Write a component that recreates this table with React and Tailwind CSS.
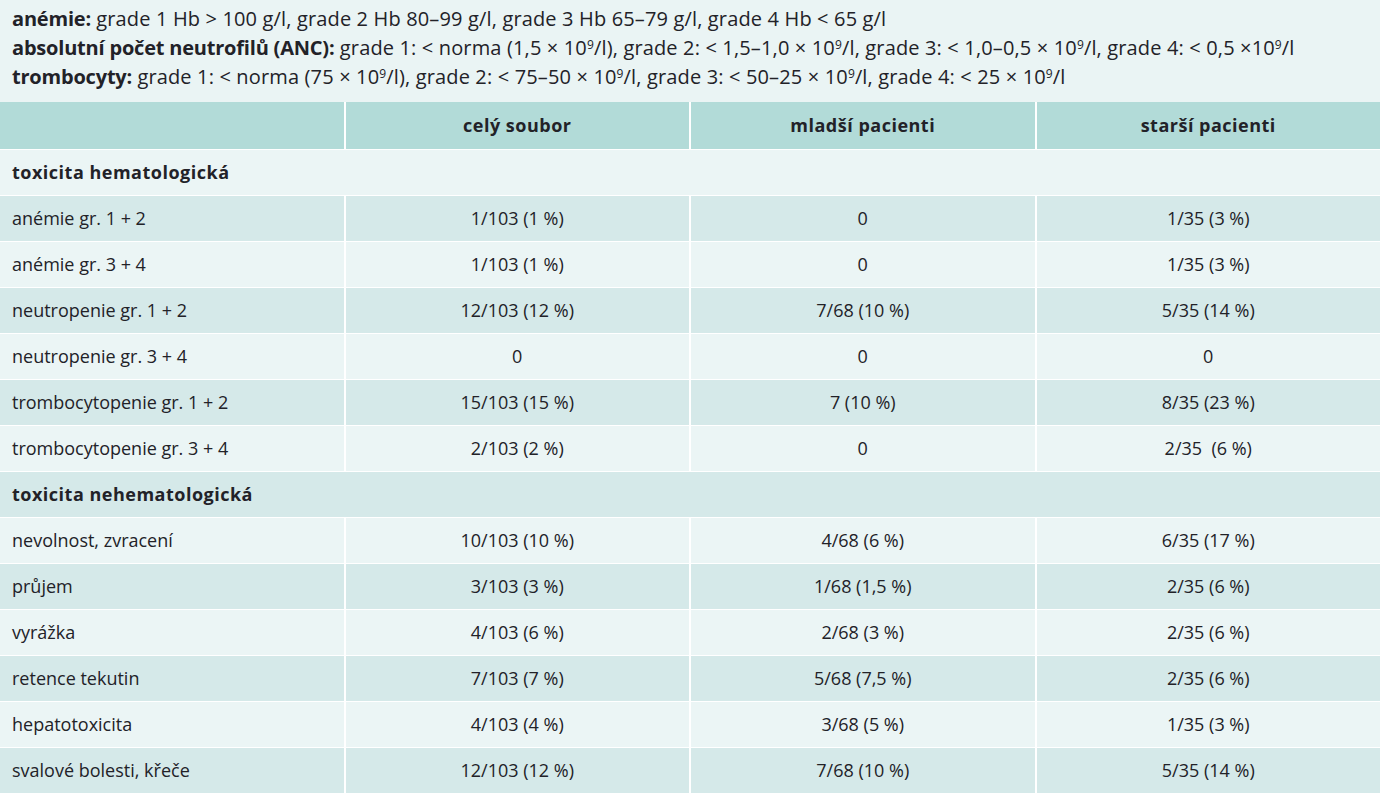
const NOTES = [
  {
    label: "anémie:",
    text: " grade 1 Hb > 100 g/l, grade 2 Hb 80–99 g/l, grade 3 Hb 65–79 g/l, grade 4 Hb < 65 g/l",
  },
  {
    label: "absolutní počet neutrofilů (ANC):",
    parts: [" grade 1: < norma (1,5 × 10", "/l), grade 2: < 1,5–1,0 × 10", "/l, grade 3: < 1,0–0,5 × 10", "/l, grade 4: < 0,5 ×10", "/l"],
  },
  {
    label: "trombocyty:",
    parts: [" grade 1: < norma (75 × 10", "/l), grade 2: < 75–50 × 10", "/l, grade 3: < 50–25 × 10", "/l, grade 4: < 25 × 10", "/l"],
  },
];

const ROWS = [
  { section: "toxicita hematologická" },
  ["anémie gr. 1 + 2", "1/103 (1 %)", "0", "1/35 (3 %)"],
  ["anémie gr. 3 + 4", "1/103 (1 %)", "0", "1/35 (3 %)"],
  ["neutropenie gr. 1 + 2", "12/103 (12 %)", "7/68 (10 %)", "5/35 (14 %)"],
  ["neutropenie gr. 3 + 4", "0", "0", "0"],
  ["trombocytopenie gr. 1 + 2", "15/103 (15 %)", "7 (10 %)", "8/35 (23 %)"],
  ["trombocytopenie gr. 3 + 4", "2/103 (2 %)", "0", "2/35  (6 %)"],
  { section: "toxicita nehematologická" },
  ["nevolnost, zvracení", "10/103 (10 %)", "4/68 (6 %)", "6/35 (17 %)"],
  ["průjem", "3/103 (3 %)", "1/68 (1,5 %)", "2/35 (6 %)"],
  ["vyrážka", "4/103 (6 %)", "2/68 (3 %)", "2/35 (6 %)"],
  ["retence tekutin", "7/103 (7 %)", "5/68 (7,5 %)", "2/35 (6 %)"],
  ["hepatotoxicita", "4/103 (4 %)", "3/68 (5 %)", "1/35 (3 %)"],
  ["svalové bolesti, křeče", "12/103 (12 %)", "7/68 (10 %)", "5/35 (14 %)"],
];

function Note({ note }) {
  return (
    <div className="h-[29px] leading-[29px] whitespace-pre">
      <b className="font-bold tracking-[-0.2px]">{note.label}</b>
      {note.text
        ? note.text
        : note.parts.map((p, i) => (
            <span key={i}>
              {p}
              {i < note.parts.length - 1 && <sup className="text-[12px]">9</sup>}
            </span>
          ))}
    </div>
  );
}

export default function App() {
  return (
    <div className="w-[1393px] h-[800px] bg-white text-[18px] text-[#222228] font-['Open_Sans',sans-serif]">
      <div className="w-[1380px]">
        {/* legend above the table */}
        <div className="h-[102px] bg-[#eaf4f4] px-3 pt-[4px] text-[20px] tracking-[0.15px]">
          {NOTES.map((n, i) => (
            <Note key={i} note={n} />
          ))}
        </div>

        <div className="flex flex-col gap-px">
          <div className="grid grid-cols-4 gap-[2px] h-[47px] font-bold tracking-[0.5px]">
            {["", "celý soubor", "mladší pacienti", "starší pacienti"].map((h, i) => (
              <div key={i} className="bg-[#b2dbd8] flex items-center justify-center">
                {h}
              </div>
            ))}
          </div>

          {ROWS.map((row, i) => {
            const bg = i % 2 === 0 ? "bg-[#ebf5f5]" : "bg-[#d5e9e9]";
            if (row.section) {
              return (
                <div key={i} className={`h-[45px] flex items-center px-3 font-bold tracking-[0.5px] ${bg}`}>
                  {row.section}
                </div>
              );
            }
            return (
              <div key={i} className="grid grid-cols-4 gap-[2px] h-[45px]">
                {row.map((c, j) => (
                  <div
                    key={j}
                    className={`${bg} flex items-center whitespace-pre ${j === 0 ? "px-3" : "justify-center"}`}
                  >
                    {c}
                  </div>
                ))}
              </div>
            );
          })}
        </div>
      </div>
    </div>
  );
}
